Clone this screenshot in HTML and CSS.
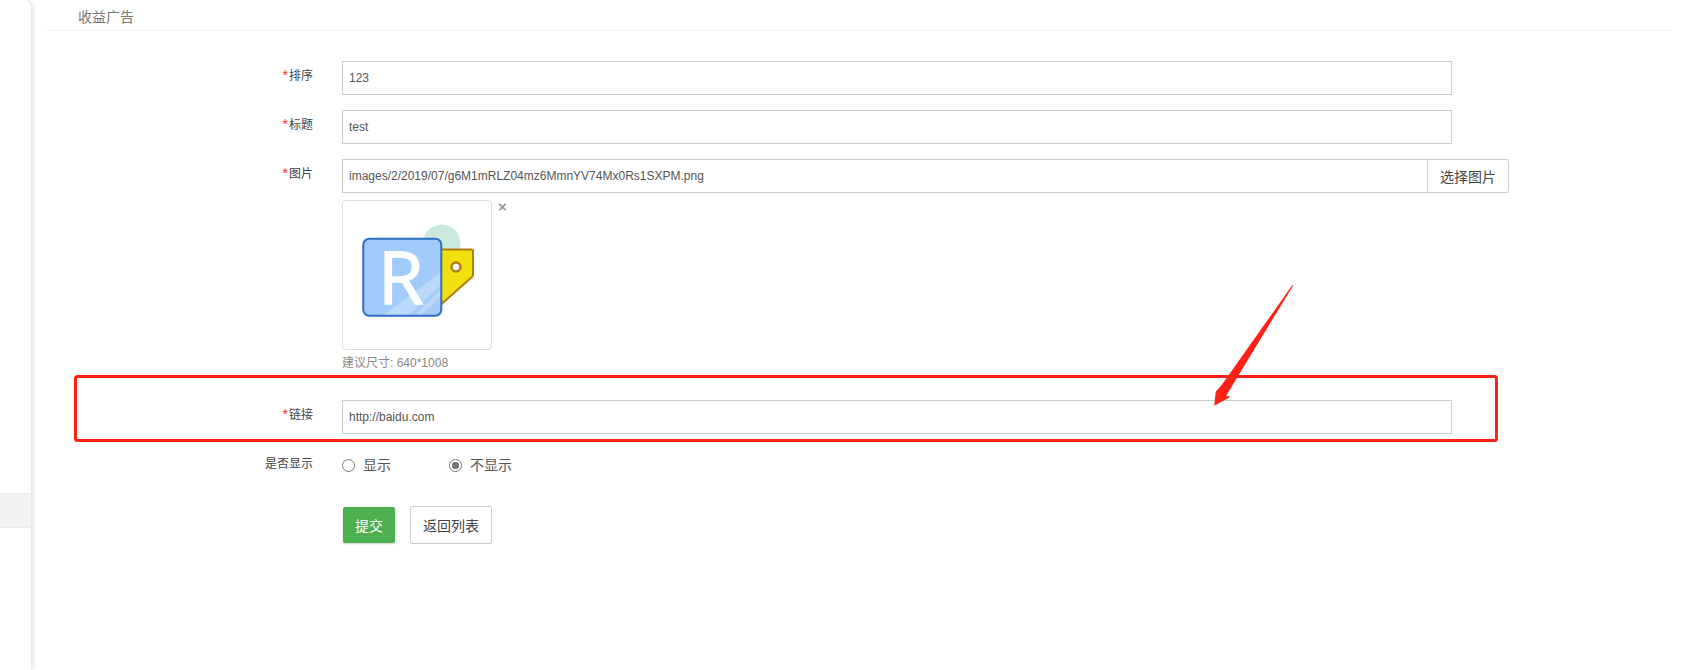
FILE: index.html
```html
<!DOCTYPE html>
<html lang="zh-CN">
<head>
<meta charset="utf-8">
<title>收益广告</title>
<link rel="stylesheet" href="styles.css">
</head>
<body>
<div class="page">
  <aside class="sidebar"><div class="side-active"></div></aside>
  <main class="content">
    <div class="tabs"><span class="tab">收益广告</span></div>
    <form class="form">
      <div class="row">
        <label class="label"><span class="req">*</span>排序</label>
        <input class="input" type="text" value="123">
      </div>
      <div class="row">
        <label class="label"><span class="req">*</span>标题</label>
        <input class="input" type="text" value="test">
      </div>
      <div class="row row-image">
        <label class="label"><span class="req">*</span>图片</label>
        <div class="image-field">
          <div class="input-group">
            <input class="input group-input" type="text" value="images/2/2019/07/g6M1mRLZ04mz6MmnYV74Mx0Rs1SXPM.png">
            <button class="pick" type="button">选择图片</button>
          </div>
          <div class="thumb-wrap">
            <div class="thumb">
              <svg width="148" height="148" viewBox="0 0 148 148">
                <circle cx="98.7" cy="42.3" r="18.7" fill="#cbe8dc"/>
                <path d="M94 48.5H128.5Q130 48.5 130 50V73.5Q130 75 129 76L94 107Z" fill="#f2df10" stroke="#b27c12" stroke-width="2" stroke-linejoin="round"/>
                <circle cx="113" cy="66" r="4.5" fill="#fff" stroke="#b27c12" stroke-width="2.5"/>
                <rect x="20.3" y="37.7" width="78" height="77" rx="6" fill="#a3cbf9"/>
                <path d="M98 71V84L66 114H40ZM98 88V95L78 114H72Z" fill="#bad8fb"/>
                <text x="35" y="103" class="logo-r">R</text>
                <rect x="20.3" y="37.7" width="78" height="77" rx="6" fill="none" stroke="#2a6fc4" stroke-width="2"/>
              </svg>
            </div>
            <span class="remove">×</span>
          </div>
          <div class="hint">建议尺寸: 640*1008</div>
        </div>
      </div>
      <div class="row">
        <label class="label"><span class="req">*</span>链接</label>
        <input class="input" type="text" value="http://baidu.com">
      </div>
      <div class="row row-radio">
        <label class="label label-radio">是否显示</label>
        <div class="radios">
          <label class="radio"><input type="radio" name="show"><span class="radio-text">显示</span></label>
          <label class="radio"><input type="radio" name="show" checked><span class="radio-text">不显示</span></label>
        </div>
      </div>
      <div class="actions">
        <button class="btn btn-submit" type="button">提交</button>
        <button class="btn btn-back" type="button">返回列表</button>
      </div>
    </form>
  </main>
  <svg class="annot" width="1696" height="670" viewBox="0 0 1696 670">
    <rect x="75.5" y="376.5" width="1421" height="64" rx="2" fill="none" stroke="#ff2016" stroke-width="3"/>
    <polygon points="1293.5,285 1292,285.5 1221.7,385 1215.7,391.7 1214.3,405.7 1230.7,396.7 1226,396 1237.3,377.3" fill="#ff2016"/>
  </svg>
</div>
</body>
</html>
```
FILE: styles.css
```css
* { box-sizing: border-box; }
html, body { margin: 0; padding: 0; background: #fff; }
body {
  font-family: "Liberation Sans", "Noto Sans CJK SC", sans-serif;
  font-size: 12px;
  color: #555;
  overflow: hidden;
}
.page {
  position: relative;
  display: flex;
  width: 1696px;
  height: 670px;
  overflow: hidden;
}
.sidebar {
  flex: 0 0 31px;
  height: 670px;
  padding-top: 493px;
  background: #fff;
  border-top-right-radius: 8px;
  box-shadow: 0 0 7px rgba(0, 0, 0, 0.2);
}
.side-active {
  height: 35px;
  background: #f3f3f3;
  border-top: 1px solid #ececec;
  border-bottom: 1px solid #ececec;
}
.content {
  flex: 1;
  padding-left: 15px;
}
.tabs {
  width: 1626px;
  height: 31px;
  padding-left: 32px;
  border-bottom: 1px solid #eee;
}
.tab {
  font-size: 14px;
  line-height: 34px;
  color: #777;
}
.form { padding-top: 30px; }
.row {
  display: flex;
  align-items: flex-start;
  margin-bottom: 15px;
}
.row-image { margin-bottom: 0; }
.label {
  flex: 0 0 267px;
  margin-right: 29px;
  text-align: right;
  line-height: 30px;
  color: #444;
}
.req {
  margin-right: 1px;
  font-size: 14px;
  line-height: 0;
  color: #ff2a1a;
}
.input {
  display: block;
  width: 1110px;
  height: 34px;
  padding: 0 6px;
  border: 1px solid #ccc;
  border-radius: 0;
  outline: 0;
  background: #fff;
  font: 12px "Liberation Sans", "Noto Sans CJK SC", sans-serif;
  color: #555;
}
.image-field { width: 1167px; }
.input-group { display: flex; }
.group-input { width: 1086px; }
.pick {
  width: 82px;
  height: 34px;
  margin-left: -1px;
  padding: 0;
  border: 1px solid #ccc;
  border-radius: 0 3px 3px 0;
  background: #fff;
  font: 14px "Liberation Sans", "Noto Sans CJK SC", sans-serif;
  color: #444;
}
.thumb-wrap {
  display: flex;
  align-items: flex-start;
  margin-top: 7px;
}
.thumb {
  width: 150px;
  height: 150px;
  border: 1px solid #ddd;
  border-radius: 4px;
  background: #fff;
}
.thumb svg { display: block; }
.logo-r {
  font-family: "Open Sans", sans-serif;
  font-size: 74px;
  fill: #fff;
  stroke: #fff;
  stroke-width: 1.4px;
}
.remove {
  margin-left: 6px;
  font-size: 15px;
  font-weight: bold;
  line-height: 13px;
  color: #999;
}
.hint {
  height: 50px;
  padding-top: 5px;
  line-height: 17px;
  color: #888;
}
.row-radio {
  height: 20px;
  margin-top: 21px;
  margin-bottom: 31px;
}
.label-radio { line-height: 18px; }
.radios { display: flex; }
.radio {
  display: flex;
  align-items: center;
  width: 107px;
  height: 20px;
  font-size: 14px;
  color: #555;
}
.radio-text { margin-top: -3px; }
.radio input {
  appearance: none;
  width: 13px;
  height: 13px;
  margin: 0 8px 0 0;
  border: 1px solid #777;
  border-radius: 50%;
  background: #fff;
}
.radio input:checked {
  background: radial-gradient(circle, #777 0 3.5px, #fff 4px);
}
.actions {
  display: flex;
  align-items: center;
  padding-left: 297px;
}
.btn {
  padding: 0;
  font: 14px "Liberation Sans", "Noto Sans CJK SC", sans-serif;
}
.btn-submit {
  width: 52px;
  height: 36px;
  border: 0;
  border-radius: 2px;
  background: #4caf50;
  color: #fff;
  box-shadow: 0 1px 2px rgba(0, 0, 0, 0.2);
}
.btn-back {
  width: 82px;
  height: 38px;
  margin-left: 15px;
  border: 1px solid #ccc;
  border-radius: 2px;
  background: #fff;
  color: #444;
}
.annot {
  position: absolute;
  left: 0;
  top: 0;
  pointer-events: none;
}
```
